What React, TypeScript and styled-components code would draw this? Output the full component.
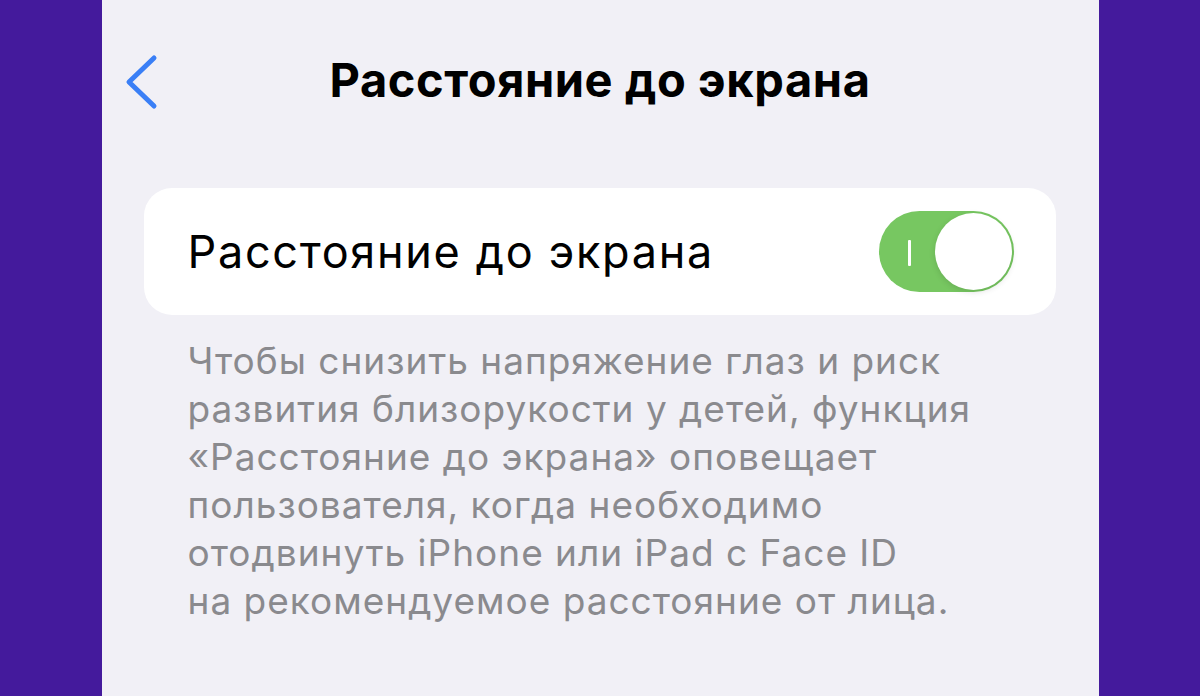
import styled, { createGlobalStyle } from 'styled-components'

const GlobalStyle = createGlobalStyle`
    html, body {
        margin: 0;
        padding: 0;
        background: #441a9c;
    }
    body {
        font-family: Inter, Roboto, "Noto Sans", sans-serif;
        -webkit-font-smoothing: antialiased;
    }
`

const descriptionLines = [
    'Чтобы снизить напряжение глаз и риск',
    'развития близорукости у детей, функция',
    '«Расстояние до экрана» оповещает',
    'пользователя, когда необходимо',
    'отодвинуть iPhone или iPad с Face ID',
    'на рекомендуемое расстояние от лица.',
]

function App() {
    return (
        <>
            <GlobalStyle />
            <Page>
                <Screen>
                    <NavBar>
                        <BackButton aria-label="Назад">
                            <svg width="36" height="56" viewBox="0 0 36 56" fill="none">
                                <path
                                    d="M30 4 L5 28 L30 52"
                                    stroke="#3a7ff6"
                                    strokeWidth="5"
                                    strokeLinecap="round"
                                    strokeLinejoin="round"
                                />
                            </svg>
                        </BackButton>
                        <Title>Расстояние до экрана</Title>
                    </NavBar>
                    <Card>
                        <Label>Расстояние до экрана</Label>
                        <Switch>
                            <OnMark />
                            <Knob />
                        </Switch>
                    </Card>
                    <Description>
                        {descriptionLines.map((line) => (
                            <span key={line}>{line}</span>
                        ))}
                    </Description>
                </Screen>
            </Page>
        </>
    )
}

export default App

const Page = styled.div`
    width: 1200px;
    height: 696px;
    display: flex;
    justify-content: center;
    background: #441a9c;
    overflow: hidden;
`

const Screen = styled.div`
    width: 997px;
    background: #f1f0f6;
    display: flex;
    flex-direction: column;
`

const NavBar = styled.header`
    position: relative;
    height: 164px;
    display: flex;
    align-items: center;
    justify-content: center;
    padding-bottom: 6px;
    box-sizing: border-box;
`

const BackButton = styled.button`
    position: absolute;
    left: 22px;
    top: 54px;
    padding: 0;
    border: none;
    background: none;
    display: flex;
`

const Title = styled.h1`
    margin: 0;
    font-size: 47px;
    font-weight: 700;
    color: #000;
    letter-spacing: 0.6px;
`

const Card = styled.div`
    margin: 24px 43px 0 42px;
    height: 127px;
    background: #fff;
    border-radius: 28px;
    display: flex;
    align-items: center;
    justify-content: space-between;
    padding: 0 42px 0 44px;
    box-sizing: border-box;
`

const Label = styled.span`
    font-size: 45px;
    font-weight: 400;
    color: #000;
    letter-spacing: 1.7px;
`

const Switch = styled.div`
    position: relative;
    width: 135px;
    height: 81px;
    border-radius: 41px;
    background: #77c761;
    display: flex;
    align-items: center;
    justify-content: flex-end;
    padding-right: 2px;
    box-sizing: border-box;
`

const OnMark = styled.span`
    position: absolute;
    left: 29px;
    top: 29px;
    width: 3px;
    height: 26px;
    background: #fff;
    border-radius: 1px;
`

const Knob = styled.span`
    width: 77px;
    height: 77px;
    border-radius: 50%;
    background: #fff;
    box-shadow: 0 2px 6px rgba(0, 0, 0, 0.12);
`

const Description = styled.p`
    margin: 22px 0 0 86px;
    display: flex;
    flex-direction: column;
    font-size: 37px;
    line-height: 48px;
    color: #8a8a8e;
    letter-spacing: 1px;
`
